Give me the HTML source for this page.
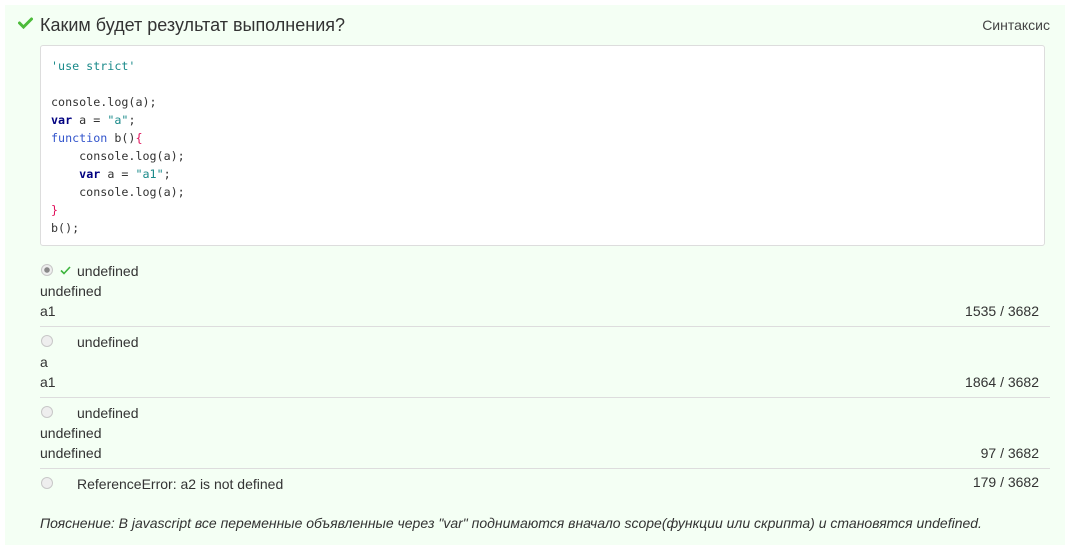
<!DOCTYPE html>
<html><head><meta charset="utf-8"><style>
body{margin:0;width:1072px;height:534px;background:#fff;font-family:"Liberation Sans",sans-serif;color:#333;position:relative;overflow:hidden}
.panel{position:absolute;left:5px;top:5px;width:1060px;height:540px;background:#f4fff4}
.abs{position:absolute;white-space:nowrap}
.title{left:40px;top:15px;font-size:18px;color:#333}
.syn{right:22px;top:17px;font-size:14px;color:#444}
.code{position:absolute;left:40px;top:45px;width:1003px;height:199px;background:#fff;border:1px solid #ddd;border-radius:3px}
pre{margin:0;position:absolute;left:10px;top:11px;font-family:"DejaVu Sans Mono","Liberation Mono",monospace;font-size:11.7px;line-height:18px;color:#333}
.s{color:#1a8a8a}.k{color:#000080;font-weight:bold}.f{color:#3355cc}.r{color:#e0105a}
.t{font-size:14px;color:#333}
.cnt{right:33px;font-size:14px;color:#333}
.sep{position:absolute;left:40px;width:1010px;height:1px;background:#ddd}
.radio{position:absolute;left:41px;width:10px;height:10px;border-radius:50%;background:#eee;border:1px solid #c8c8c8}
.exp{left:40px;top:515px;font-size:14px;font-style:italic;color:#333}
</style></head><body>
<div class="panel"></div>
<svg class="abs" style="left:18px;top:17px" width="15" height="12" viewBox="0 0 15 12"><path d="M1.5 6 L5.5 10 L13.5 2" stroke="#4cbb3a" stroke-width="3" fill="none" stroke-linecap="round"/></svg>
<div class="abs title">Каким будет результат выполнения?</div>
<div class="abs syn">Синтаксис</div>
<div class="code"><pre><span class="s">'use strict'</span>

console.log(a);
<span class="k">var</span> a = <span class="s">"a"</span>;
<span class="f">function</span> b()<span class="r">{</span>
    console.log(a);
    <span class="k">var</span> a = <span class="s">"a1"</span>;
    console.log(a);
<span class="r">}</span>
b();</pre></div>

<div class="radio" style="top:264px;background:radial-gradient(circle,#888 0 2.5px,#eee 3px)"></div>
<svg class="abs" style="left:60px;top:266px" width="11" height="9" viewBox="0 0 11 9"><path d="M1 4.5 L4 7.5 L10 1" stroke="#3cb43c" stroke-width="1.6" fill="none"/></svg>
<div class="abs t" style="left:77px;top:263px">undefined</div>
<div class="abs t" style="left:40px;top:283px">undefined</div>
<div class="abs t" style="left:40px;top:303px">a1</div>
<div class="abs cnt" style="top:303px">1535 / 3682</div>
<div class="sep" style="top:326px"></div>

<div class="radio" style="top:335px"></div>
<div class="abs t" style="left:77px;top:334px">undefined</div>
<div class="abs t" style="left:40px;top:354px">a</div>
<div class="abs t" style="left:40px;top:374px">a1</div>
<div class="abs cnt" style="top:374px">1864 / 3682</div>
<div class="sep" style="top:397px"></div>

<div class="radio" style="top:406px"></div>
<div class="abs t" style="left:77px;top:405px">undefined</div>
<div class="abs t" style="left:40px;top:425px">undefined</div>
<div class="abs t" style="left:40px;top:445px">undefined</div>
<div class="abs cnt" style="top:445px">97 / 3682</div>
<div class="sep" style="top:468px"></div>

<div class="radio" style="top:477px"></div>
<div class="abs t" style="left:77px;top:476px">ReferenceError: a2 is not defined</div>
<div class="abs cnt" style="top:474px">179 / 3682</div>

<div class="abs exp">Пояснение: В javascript все переменные объявленные через "var" поднимаются вначало scope(функции или скрипта) и становятся undefined.</div>
</body></html>
